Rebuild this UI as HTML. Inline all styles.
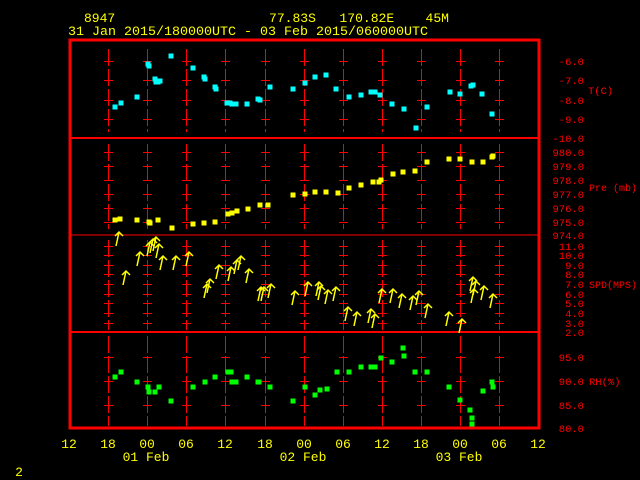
<!DOCTYPE html>
<html><head><meta charset="utf-8"><style>
html,body{margin:0;padding:0;background:#000;width:640px;height:480px;overflow:hidden}
svg{display:block}
text{font-family:"Liberation Mono",monospace;white-space:pre}
.y{fill:#ffff00;font-size:13px}
.r{fill:#ff0000;font-size:10.5px}
line,rect{shape-rendering:crispEdges}
</style></head><body>
<svg id="s" width="640" height="480" xmlns="http://www.w3.org/2000/svg" xml:space="preserve">
<text class="y" x="84" y="22">8947</text>
<text class="y" x="269" y="22" textLength="180" lengthAdjust="spacingAndGlyphs">77.83S   170.82E    45M</text>
<text class="y" x="68" y="35" textLength="360" lengthAdjust="spacingAndGlyphs">31 Jan 2015/180000UTC - 03 Feb 2015/060000UTC</text>
<g id="grid"></g>
<rect x="70" y="40" width="469" height="388" fill="none" stroke="#ff0000" stroke-width="3"/>
<line x1="70" y1="138" x2="539" y2="138" stroke="#f00" stroke-width="2"/>
<line x1="70" y1="235" x2="539" y2="235" stroke="#f00" stroke-width="1"/>
<line x1="70" y1="332" x2="539" y2="332" stroke="#f00" stroke-width="2"/>
<g class="r" text-anchor="end">
<text x="584" y="65">-6.0</text><text x="584" y="84">-7.0</text><text x="584" y="104">-8.0</text><text x="584" y="123">-9.0</text><text x="584" y="142">-10.0</text>
<text x="584" y="156">980.0</text><text x="584" y="170">979.0</text><text x="584" y="184">978.0</text><text x="584" y="198">977.0</text><text x="584" y="212">976.0</text><text x="584" y="226">975.0</text><text x="584" y="239">974.0</text>
<text x="584" y="250">11.0</text><text x="584" y="259">10.0</text><text x="584" y="269">9.0</text><text x="584" y="278">8.0</text><text x="584" y="288">7.0</text><text x="584" y="298">6.0</text><text x="584" y="307">5.0</text><text x="584" y="317">4.0</text><text x="584" y="327">3.0</text><text x="584" y="336">2.0</text>
<text x="584" y="361">95.0</text><text x="584" y="385">90.0</text><text x="584" y="409">85.0</text><text x="584" y="432">80.0</text>
</g>
<g class="r">
<text x="588" y="94">T(C)</text><text x="589" y="191" textLength="48" lengthAdjust="spacingAndGlyphs">Pre (mb)</text><text x="589" y="288" textLength="48" lengthAdjust="spacingAndGlyphs">SPD(MPS)</text><text x="589" y="385">RH(%)</text>
</g>
<g class="y" text-anchor="middle" style="font-size:13px">
<text x="69" y="448">12</text><text x="108" y="448">18</text><text x="147" y="448">00</text><text x="186" y="448">06</text><text x="225" y="448">12</text><text x="265" y="448">18</text><text x="304" y="448">00</text><text x="343" y="448">06</text><text x="382" y="448">12</text><text x="421" y="448">18</text><text x="460" y="448">00</text><text x="499" y="448">06</text><text x="538" y="448">12</text>
<text x="146" y="461">01 Feb</text><text x="303" y="461">02 Feb</text><text x="459" y="461">03 Feb</text>
<text x="19" y="476">2</text>
</g>
<g id="pts"></g>
</svg>
<script>
var NS="http://www.w3.org/2000/svg",g=document.getElementById("grid"),p=document.getElementById("pts");
function el(par,t,a){var e=document.createElementNS(NS,t);for(var k in a)e.setAttribute(k,a[k]);par.appendChild(e);return e;}
var xs=[108,147,186,225,265,304,343,382,421,460,499];
var ticks=[61,80,100,119,152,166,180,194,208,222,246,255,265,274,284,294,303,313,323,357,381,405];
var segs=[[49,132],[144,229],[240,330],[336,426]];
xs.forEach(function(x){
 segs.forEach(function(s){el(g,"line",{x1:x+0.5,y1:s[0],x2:x+0.5,y2:s[1],stroke:"#f00","stroke-width":"1.2","stroke-dasharray":"17,3"});});
 ticks.forEach(function(y){el(g,"line",{x1:x-4,y1:y+0.5,x2:x+5,y2:y+0.5,stroke:"#f00"});});
});
function sq(list,c){list.forEach(function(q){el(p,"rect",{x:q[0]-2.5,y:q[1]-2.5,width:5,height:5,fill:c});});}
sq([[115,107],[121,103],[137,97],[148,64],[149,66],[155,79],[156,82],[158,82],[160,81],[171,56],[193,68],[204,77],[205,79],[215,87],[216,89],[227,103],[230,103],[232,104],[236,104],[247,104],[258,99],[260,100],[270,87],[293,89],[305,83],[315,77],[326,75],[336,89],[349,97],[361,95],[371,92],[375,92],[380,95],[392,104],[404,109],[416,128],[427,107],[450,92],[460,94],[471,86],[473,85],[482,94],[492,114]],"#00ffff");
sq([[115,220],[120,219],[137,220],[149,222],[150,223],[158,220],[172,228],[193,224],[204,223],[215,222],[228,214],[232,213],[237,211],[248,209],[260,205],[268,205],[293,195],[305,194],[315,192],[326,192],[338,193],[349,188],[361,185],[373,182],[379,182],[381,180],[393,174],[403,172],[415,171],[427,162],[449,159],[460,159],[472,162],[483,162],[492,157],[493,156]],"#ffff00");
sq([[115,377],[121,372],[137,382],[148,387],[149,392],[155,392],[159,387],[171,401],[193,387],[205,382],[215,377],[228,372],[231,372],[232,382],[236,382],[247,377],[258,382],[259,382],[270,387],[293,401],[305,387],[315,395],[320,390],[327,389],[337,372],[349,372],[361,367],[371,367],[375,367],[381,358],[392,362],[403,348],[404,356],[415,372],[427,372],[449,387],[460,400],[470,410],[472,418],[472,424],[483,391],[492,382],[493,387]],"#00ff00");
var ar=[[118,238],[125,277],[139,258],[149,248],[152,245],[155,243],[158,250],[162,262],[175,262],[188,258],[206,290],[209,285],[218,271],[230,273],[236,266],[240,262],[248,275],[260,293],[263,293],[270,290],[294,297],[307,288],[318,288],[320,292],[327,296],[335,293],[347,313],[356,318],[370,315],[374,320],[381,295],[392,295],[401,300],[412,302],[418,297],[427,310],[448,318],[461,325],[472,283],[473,295],[475,287],[483,292],[492,300]];
ar.forEach(function(a){var x=a[0],y=a[1];
 el(p,"path",{d:"M"+(x-2)+","+(y+8)+"L"+(x+1)+","+(y-6)+"M"+(x-3)+","+(y-2)+"L"+(x+1)+","+(y-6)+"L"+(x+5)+","+(y-2),stroke:"#ffff00","stroke-width":"1.5",fill:"none"});});
</script>
</body></html>
